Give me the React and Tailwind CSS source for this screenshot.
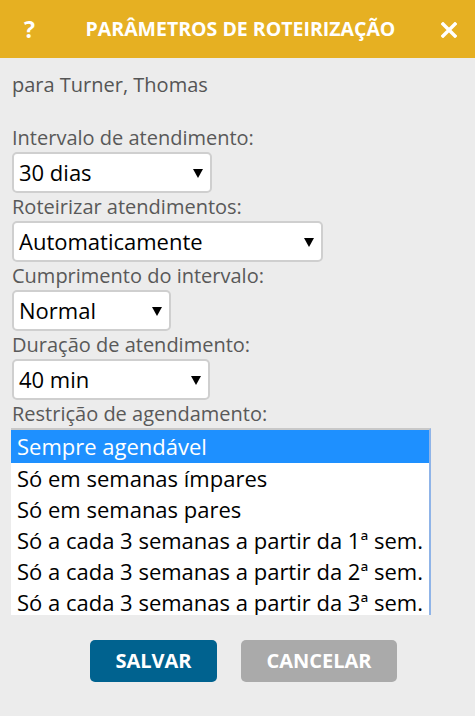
import React from "react";

const font = { fontFamily: '"Open Sans", "Liberation Sans", sans-serif' };

function FakeSelect({ value, width }) {
  return (
    <div
      className={`${width} h-[41px] flex items-center justify-between bg-white border-2 border-[#cfcfcf] rounded-[5px] pl-[5px] pr-[7px] text-[22px] text-black`}
    >
      <span>{value}</span>
      <svg width="10" height="9" viewBox="0 0 10 9" className="mt-[2px]">
        <path d="M0 0 H10 L5 9 Z" fill="black" />
      </svg>
    </div>
  );
}

function Label({ children }) {
  return <div className="h-[28px] leading-[28px] text-[20px] text-[#595959] whitespace-nowrap">{children}</div>;
}

const options = [
  "Sempre agendável",
  "Só em semanas ímpares",
  "Só em semanas pares",
  "Só a cada 3 semanas a partir da 1ª sem.",
  "Só a cada 3 semanas a partir da 2ª sem.",
  "Só a cada 3 semanas a partir da 3ª sem.",
];

export default function App() {
  return (
    <div className="w-[475px] h-[716px] bg-[#ececec] flex flex-col" style={font}>
      <div className="h-[58px] shrink-0 bg-[#e6b022] flex items-center justify-between pl-[24px] pr-[18px] text-white font-bold">
        <span className="text-[23px] w-[16px]">?</span>
        <span className="text-[19.5px]">PARÂMETROS DE ROTEIRIZAÇÃO</span>
        <svg width="16" height="16" viewBox="0 0 16 16" className="mt-[2px]">
          <path d="M2 2 L14 14 M14 2 L2 14" stroke="white" strokeWidth="3.4" strokeLinecap="square" />
        </svg>
      </div>

      <div className="px-[12px]">
        <div className="h-[66px] pt-[13px] leading-[28px] text-[20px] text-[#555]">para Turner, Thomas</div>

        <Label>Intervalo de atendimento:</Label>
        <FakeSelect value="30 dias" width="w-[200px]" />
        <Label>Roteirizar atendimentos:</Label>
        <FakeSelect value="Automaticamente" width="w-[311px]" />
        <Label>Cumprimento do intervalo:</Label>
        <FakeSelect value="Normal" width="w-[159px]" />
        <Label>Duração de atendimento:</Label>
        <FakeSelect value="40 min" width="w-[198px]" />
        <Label>Restrição de agendamento:</Label>

        <div className="-ml-px w-[420px] h-[187px] bg-white border-t-2 border-t-[#c8c8c8] border-r-2 border-r-[#8fb4e8] overflow-hidden">
          {options.map((o, i) => (
            <div
              key={o}
              className={`leading-[31px] px-[6px] text-[22px] whitespace-nowrap ${
                i === 0 ? "h-[33px] leading-[33px] bg-[#1e90ff] text-white" : "h-[31px] text-black"
              }`}
            >
              {o}
            </div>
          ))}
        </div>
      </div>

      <div className="flex justify-center gap-[24px] mt-[25px] ml-[12px]">
        <button className="w-[127px] h-[42px] rounded-[5px] bg-[#00628f] text-white font-bold text-[20px]">
          SALVAR
        </button>
        <button className="w-[156px] h-[42px] rounded-[5px] bg-[#aaaaaa] text-white font-bold text-[20px]">
          CANCELAR
        </button>
      </div>
    </div>
  );
}
